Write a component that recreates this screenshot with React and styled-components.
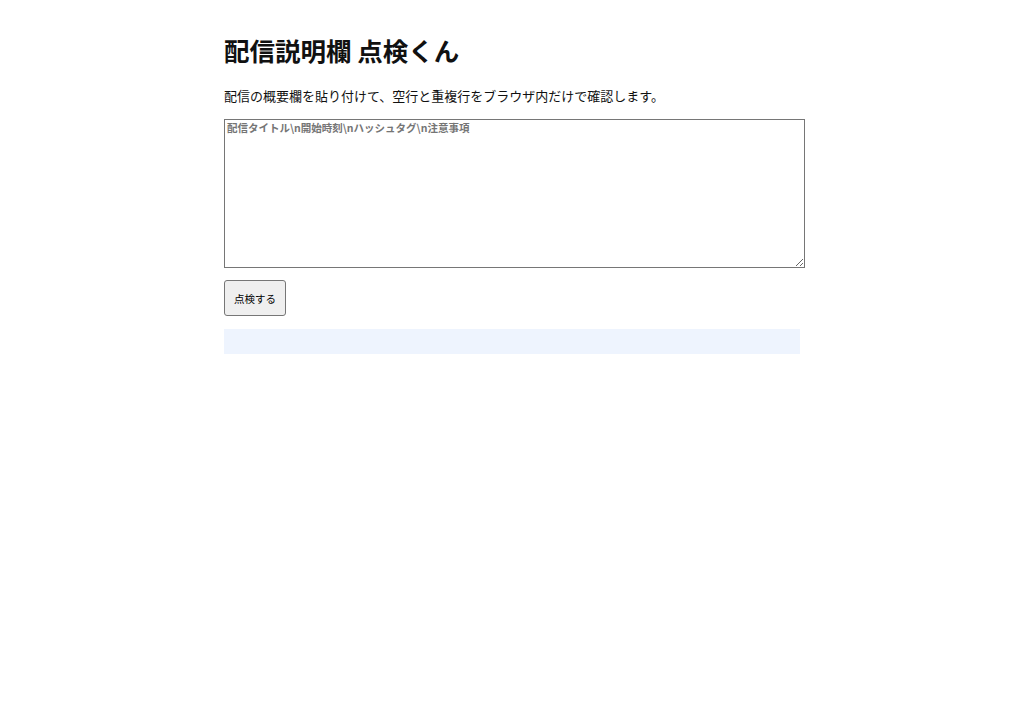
import React, {useState} from 'react';
import styled, {createGlobalStyle} from 'styled-components';

const GlobalStyle = createGlobalStyle`
  body {
    margin: 0;
    background: #ffffff;
    color: #111111;
    font-family: "Noto Sans CJK JP", "Noto Sans", sans-serif;
  }
`

const Main = styled.main`
  max-width: 576px;
  margin: 0 auto;
  padding: 31px 0;
`

const Title = styled.h1`
  margin: 0 0 16px;
  font-size: 25.5px;
  line-height: 38px;
  font-weight: 700;
`

const Lead = styled.p`
  margin: 0 0 12px;
  font-size: 13px;
  line-height: 22px;
`

const Form = styled.div`
  display: flex;
  flex-direction: column;
  align-items: flex-start;
  gap: 12px;
`

const Input = styled.textarea`
  display: block;
  width: 581px;
  height: 149px;
  box-sizing: border-box;
  margin: 0;
  padding: 1px 2px;
  border: 1px solid #767676;
  border-radius: 0;
  font-family: "Noto Sans CJK JP", "Noto Sans", sans-serif;
  font-size: 10.5px;
  line-height: 14px;

  &::placeholder {
    color: #757575;
    font-weight: 700;
  }
`

const Button = styled.button`
  height: 36px;
  padding: 0 9px;
  border: 1px solid #767676;
  border-radius: 3px;
  background: #efefef;
  color: #000;
  font-family: "Noto Sans CJK JP", "Noto Sans", sans-serif;
  font-size: 10.5px;
  cursor: pointer;
`

const Result = styled.div`
  width: 576px;
  min-height: 25px;
  margin-top: 1px;
  box-sizing: border-box;
  background: #eef4fe;
  font-size: 13px;
  white-space: pre-wrap;
`

const check = (text) => {
  const lines = text.split('\n')
  const seen = {}
  const out = []
  lines.forEach((line, i) => {
    if (line.trim() === '') out.push(`${i + 1}行目: 空行`)
    else if (seen[line]) out.push(`${i + 1}行目: 重複 (${seen[line]}行目)`)
    else seen[line] = i + 1
  })
  return out.join('\n')
}

const App = () => {
  const [text, setText] = useState('')
  const [result, setResult] = useState('')

  return (
    <>
      <GlobalStyle/>
      <Main>
        <Title>配信説明欄 点検くん</Title>
        <Lead>配信の概要欄を貼り付けて、空行と重複行をブラウザ内だけで確認します。</Lead>
        <Form>
          <Input
            value={text}
            onChange={(e) => setText(e.target.value)}
            placeholder={'配信タイトル\\n開始時刻\\nハッシュタグ\\n注意事項'}
          />
          <Button onClick={() => setResult(check(text))}>点検する</Button>
          <Result>{result}</Result>
        </Form>
      </Main>
    </>
  );
};

export default App;
